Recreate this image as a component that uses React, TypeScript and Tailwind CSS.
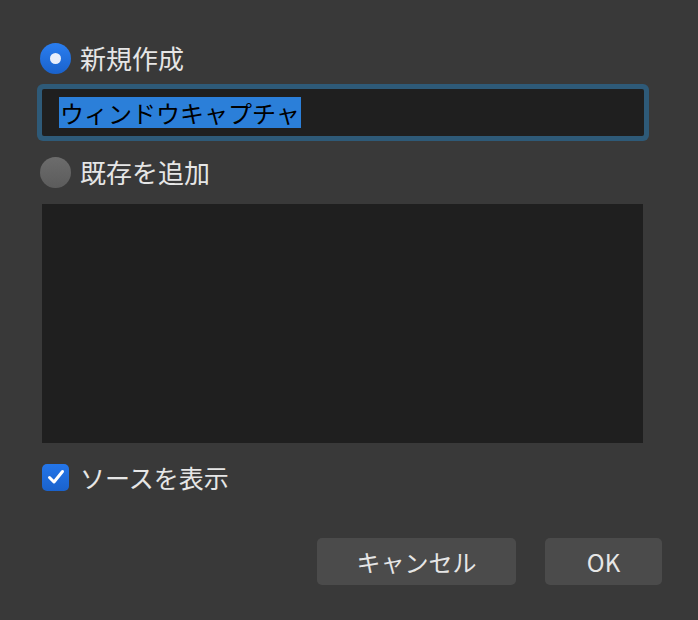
export default function App() {
  return (
    <div
      className="w-[698px] h-[620px] bg-[#393939] text-[#e6e6e6] pl-[40px] pr-[37px] pt-[42px]"
      style={{ fontFamily: '"Noto Sans CJK JP", "Noto Sans", sans-serif' }}
    >
      <label className="flex items-center h-[32px] gap-[9px]">
        <span className="w-[31px] h-[31px] rounded-full bg-gradient-to-b from-[#2a7ef0] to-[#1a62cc] flex items-center justify-center">
          <span className="w-[11px] h-[11px] rounded-full bg-[#e8eefb]" />
        </span>
        <span className="text-[26px] leading-none">新規作成</span>
      </label>

      <div className="mt-[10px] ml-[-3px] mr-[12px] rounded-[6px] bg-[#2e5a78] p-[5px]">
        <div className="h-[47px] bg-[#1f1f1f] rounded-[2px] flex items-center pl-[17px]">
          <span className="bg-[#2b7fd9] text-black text-[24px] leading-[31px] px-[1px]">
            ウィンドウキャプチャ
          </span>
        </div>
      </div>

      <label className="flex items-center h-[32px] gap-[9px] mt-[15px]">
        <span className="w-[31px] h-[31px] rounded-full bg-gradient-to-b from-[#6c6c6c] to-[#5c5c5c]" />
        <span className="text-[26px] leading-none">既存を追加</span>
      </label>

      <div className="mt-[16px] ml-[2px] mr-[18px] h-[239px] bg-[#1f1f1f]" />

      <label className="flex items-center mt-[20px] ml-[2px] gap-[11px] h-[28px]">
        <span className="w-[27px] h-[27px] rounded-[5px] bg-gradient-to-b from-[#2476ea] to-[#1a62cc] flex items-center justify-center">
          <svg width="20" height="20" viewBox="0 0 20 20" fill="none">
            <path d="M3.5 10.5 L8 15 L16.5 4.5" stroke="white" strokeWidth="3" strokeLinecap="round" strokeLinejoin="round" />
          </svg>
        </span>
        <span className="text-[25px] leading-none">ソースを表示</span>
      </label>

      <div className="flex justify-end gap-[29px] mt-[47px] mr-[-1px]">
        <button className="w-[199px] h-[47px] rounded-[5px] bg-[#4b4b4b] text-[24px] text-[#e6e6e6]">
          キャンセル
        </button>
        <button className="w-[117px] h-[47px] rounded-[5px] bg-[#4b4b4b] text-[24px] text-[#e6e6e6]">
          OK
        </button>
      </div>
    </div>
  );
}
